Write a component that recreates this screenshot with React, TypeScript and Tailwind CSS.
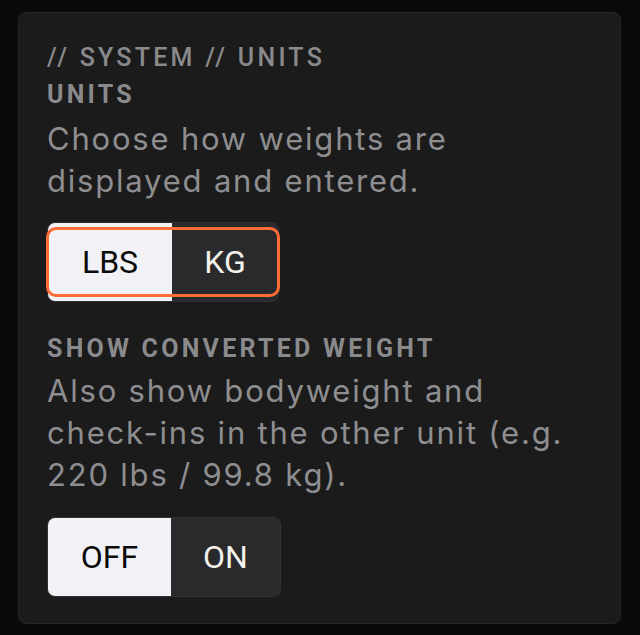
import React from "react";

function Segmented({
  left,
  right,
  ring,
  wide,
}: {
  left: string;
  right: string;
  ring?: boolean;
  wide?: boolean;
}) {
  return (
    <div className="relative inline-flex h-[80px] rounded-[8px] border border-[#323236] bg-[#2a2a2d] font-['Roboto',sans-serif] text-[32px] leading-none">
      <button
        className={
          wide
            ? "flex w-[123px] items-center justify-center rounded-l-[7px] bg-[#f2f2f6] text-[#0b0b0b]"
            : "flex w-[124px] items-center justify-center rounded-l-[7px] bg-[#f2f2f6] text-[#0b0b0b]"
        }
      >
        {left}
      </button>
      <button
        className={
          wide
            ? "flex w-[109px] items-center justify-center text-[#f3f1ea]"
            : "flex w-[106px] items-center justify-center text-[#f3f1ea]"
        }
      >
        {right}
      </button>
      {ring && (
        <div className="pointer-events-none absolute -left-[2px] -right-[2px] top-[4px] bottom-[4px] rounded-[10px] border-[3px] border-[#ff6b35]" />
      )}
    </div>
  );
}

export default function App() {
  return (
    <div className="h-[635px] w-[640px] bg-[#0a0a0a] pl-[18px] pr-[19px] pt-[12px]">
      <div className="h-[612px] rounded-[8px] border border-[#252525] bg-[#1b1b1b] px-[28px] pt-[26px]">
        <div className="font-['Roboto',sans-serif] text-[25px] font-medium leading-[37px] tracking-[0.13em] text-[#8a8a8c]">
          // SYSTEM // UNITS
        </div>
        <div className="font-['Roboto',sans-serif] text-[25px] font-bold leading-[37px] tracking-[0.13em] text-[#8a8a8c]">
          UNITS
        </div>
        <p className="mt-[5px] font-['Inter',sans-serif] text-[31px] leading-[42px] tracking-[1.8px] text-[#8e8e90]">
          Choose how weights are
          <br />
          displayed and entered.
        </p>
        <div className="mt-[20px]">
          <Segmented left="LBS" right="KG" ring />
        </div>
        <div className="mt-[28px] font-['Roboto',sans-serif] text-[25px] font-bold leading-[37px] tracking-[0.13em] text-[#8a8a8c]">
          SHOW CONVERTED WEIGHT
        </div>
        <p className="mt-[3px] font-['Inter',sans-serif] text-[31px] leading-[42px] tracking-[1.8px] text-[#8e8e90]">
          Also show bodyweight and
          <br />
          check-ins in the other unit (e.g.
          <br />
          220 lbs / 99.8 kg).
        </p>
        <div className="mt-[21px]">
          <Segmented left="OFF" right="ON" wide />
        </div>
      </div>
    </div>
  );
}
